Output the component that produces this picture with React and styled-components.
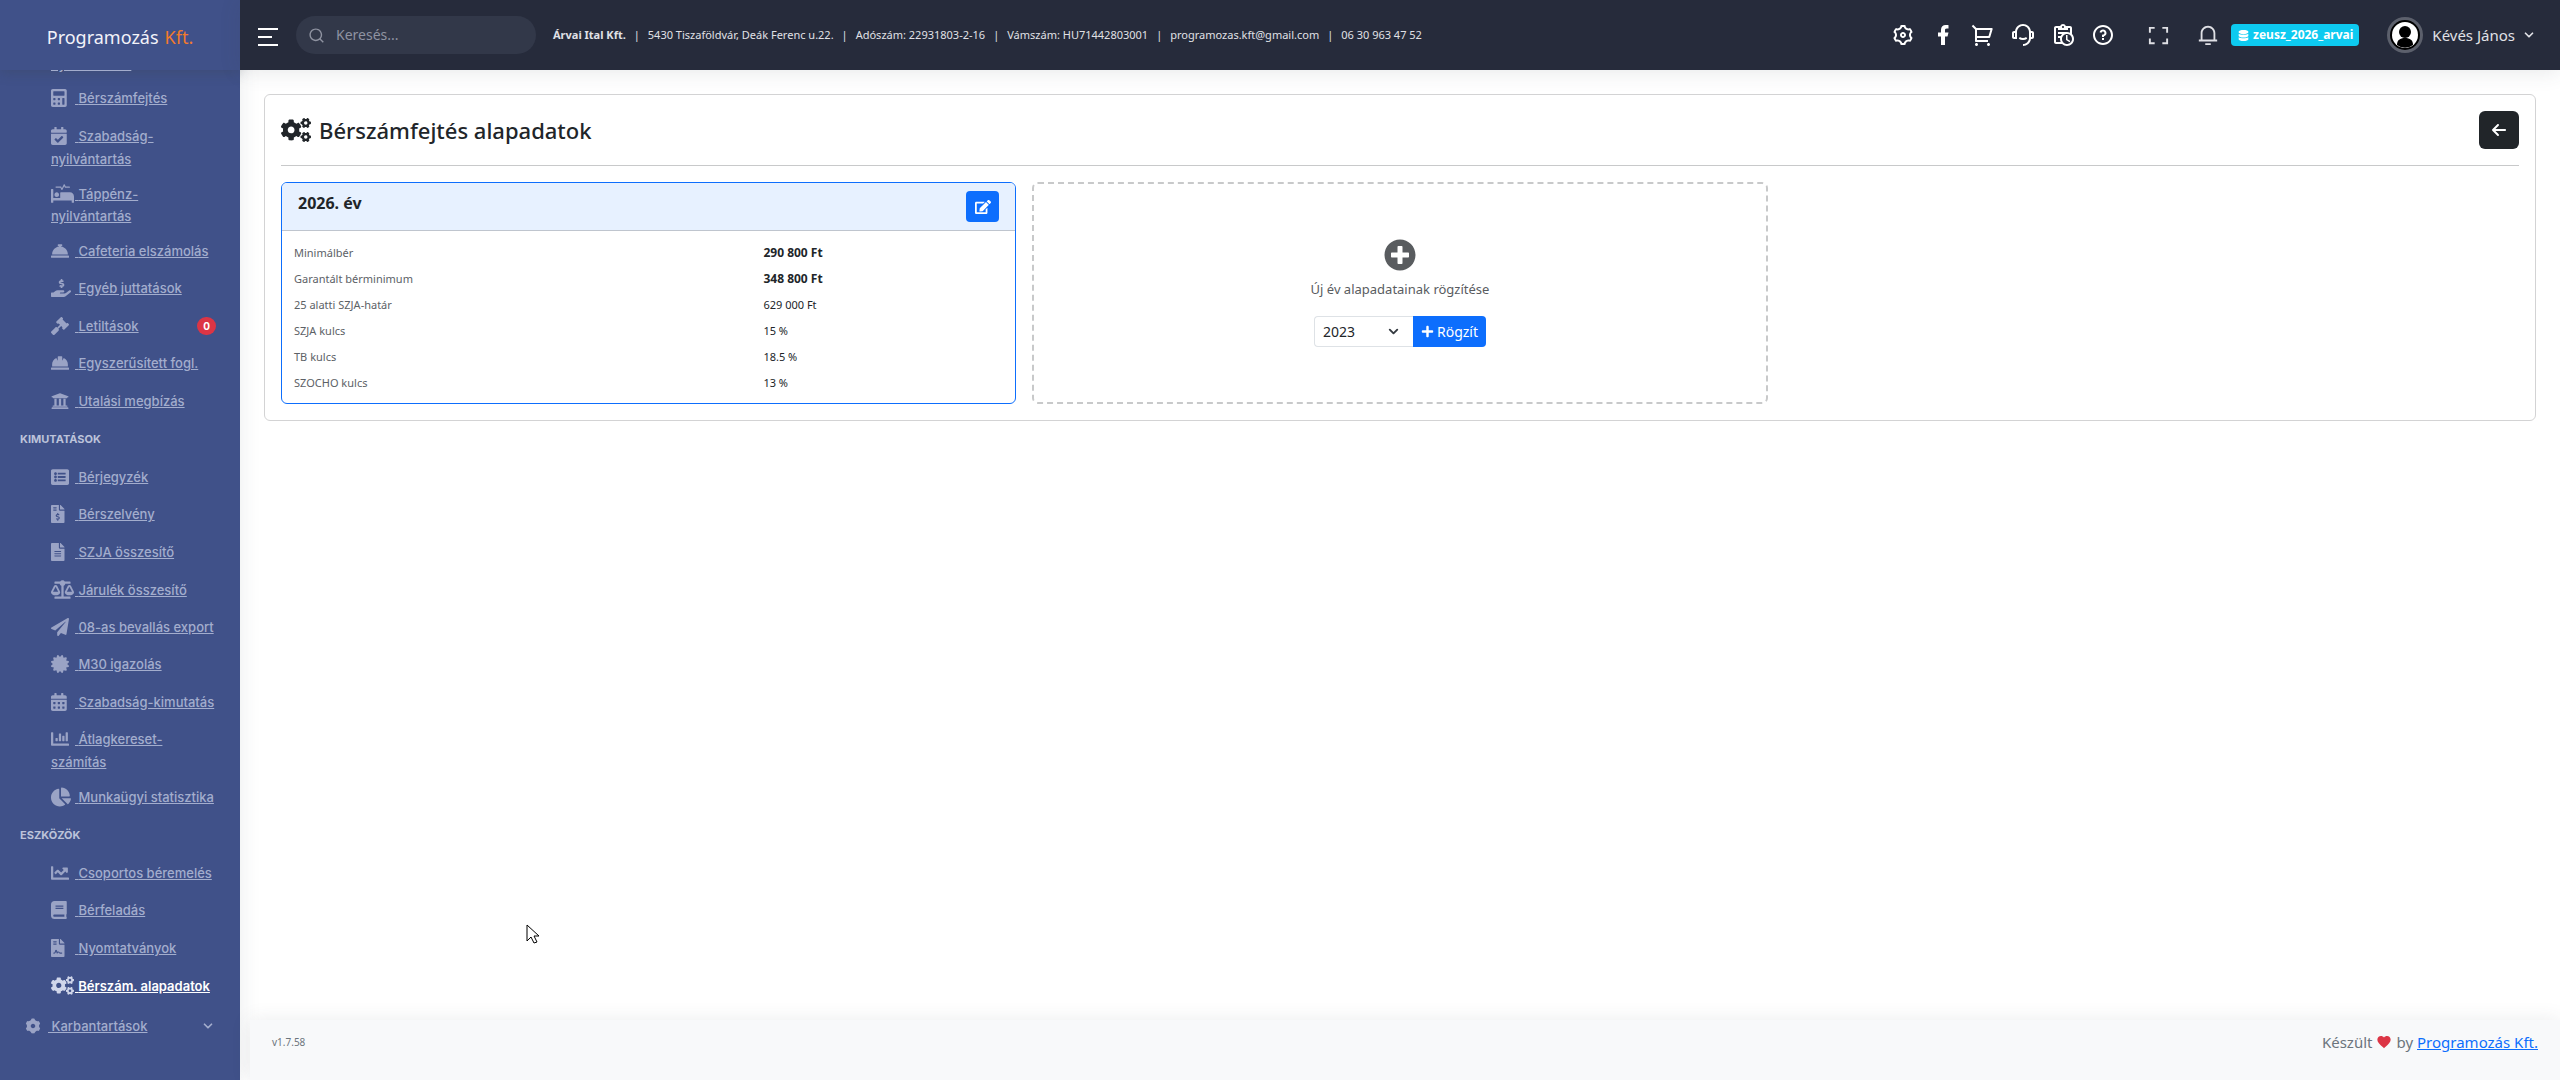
import React from 'react';
import styled, { createGlobalStyle } from 'styled-components';
import {
  FaCalculator, FaCalendarCheck, FaProcedures, FaConciergeBell, FaHandHoldingUsd, FaGavel,
  FaHardHat, FaUniversity, FaListAlt, FaFileInvoiceDollar, FaFileAlt, FaBalanceScale,
  FaPaperPlane, FaCertificate, FaCalendarAlt, FaChartBar, FaChartPie, FaChartLine, FaBook,
  FaFileContract, FaCogs, FaEdit, FaPlusCircle, FaPlus, FaDatabase,
} from 'react-icons/fa';
import { FaArrowLeft } from 'react-icons/fa6';
import {
  RiSettings3Line, RiSettings3Fill, RiShoppingCart2Line, RiCustomerService2Line,
  RiQuestionLine, RiFacebookFill, RiNotification3Line, RiSearchLine, RiFullscreenLine,
} from 'react-icons/ri';
import { MdFavorite } from 'react-icons/md';
import { FiChevronDown } from 'react-icons/fi';

const ui = '"Noto Sans", "Open Sans", sans-serif';
const side = 'Inter, "Liberation Sans", sans-serif';

const Global = createGlobalStyle`
  *, *::before, *::after { box-sizing: border-box; }
  body {
    margin: 0;
    background: #fff;
    color: #212529;
    font: 400 15px/24px ${ui};
  }
  button, input, select { font: inherit; }
  button { cursor: pointer; }
  svg { display: block; flex: none; }
`;

const Shell = styled.div`
  display: flex;
  height: 100vh;
  overflow: hidden;
`;

const Sidebar = styled.aside`
  flex: none;
  width: 240px;
  display: flex;
  flex-direction: column;
  background: #405189;
  font-family: ${side};
  box-shadow: 0 0 20px rgba(56, 65, 74, 0.1);
`;

const Brand = styled.a`
  flex: none;
  height: 70px;
  display: flex;
  align-items: center;
  justify-content: center;
  gap: 6px;
  padding-top: 4px;
  color: #f3f3f9;
  font: 400 18px/24px ${ui};
  text-decoration: none;
  box-shadow: 0 2px 12px rgba(56, 65, 74, 0.3);
`;

const Accent = styled.span`
  color: #f27a2c;
`;

const Scroller = styled.nav`
  flex: 1;
  min-height: 0;
  overflow: hidden;
  display: flex;
  flex-direction: column;
  justify-content: flex-end;
  padding-bottom: 31px;
`;

const Menu = styled.ul`
  list-style: none;
  margin: 0;
  padding: 0;
`;

const GroupTitle = styled.h2`
  margin: 0;
  padding: 10px 20px 9px;
  color: #bcc3da;
  font-size: 11px;
  line-height: 20px;
  font-weight: 700;
  text-transform: uppercase;
`;

const Row = styled.li`
  display: flex;
  align-items: center;
  padding: 6px 24px 5px 51px;
  &:nth-child(even) { padding-bottom: 6px; }
`;

const MenuLink = styled.a`
  flex: 1;
  color: ${(p) => (p.$active ? '#fff' : '#a3adcd')};
  font-size: 13px;
  line-height: 20px;
  font-weight: ${(p) => (p.$active ? 600 : 500)};
  text-decoration: underline;
`;

const Glyph = styled.span`
  display: inline-flex;
  align-items: center;
  min-width: 24px;
  height: 26px;
  vertical-align: ${(p) => (p.$size > 20 ? '-6px' : p.$size > 18 ? '-5px' : '-4px')};
  font-size: ${(p) => p.$size}px;
  color: ${(p) => (p.$active ? '#d0d6ea' : '#9aa3c5')};
`;

const Count = styled.span`
  flex: none;
  min-width: 19px;
  padding: 4px 5px;
  border-radius: 9px;
  background: #dc3545;
  color: #fff;
  font-size: 10px;
  line-height: 10px;
  font-weight: 700;
  text-align: center;
`;

const Maintenance = styled.div`
  display: flex;
  align-items: center;
  padding: 9px 25px 10px 24px;
  color: #a3adcd;
`;

const Main = styled.div`
  flex: 1;
  min-width: 0;
  display: flex;
  flex-direction: column;
`;

const Topbar = styled.header`
  flex: none;
  height: 70px;
  display: flex;
  align-items: center;
  padding: 0 24px 0 18px;
  background: #262b3b;
  color: #e9ebf2;
  box-shadow: 0 2px 20px rgba(56, 65, 74, 0.12);
`;

const Burger = styled.button`
  display: grid;
  gap: 6px;
  padding: 4px 0 0;
  width: 20px;
  border: 0;
  background: none;
`;

const Bar = styled.span`
  height: 2px;
  width: ${(p) => (p.$short ? '14px' : '20px')};
  background: #fff;
`;

const Search = styled.label`
  display: flex;
  align-items: center;
  gap: 11px;
  width: 240px;
  height: 38px;
  margin: 0 17px 0 18px;
  padding: 0 12px;
  border-radius: 19px;
  background: #323849;
  color: #8f93a1;
`;

const SearchInput = styled.input`
  flex: 1;
  min-width: 0;
  padding: 0;
  border: 0;
  outline: 0;
  background: none;
  color: #fff;
  font-size: 14px;
  &::placeholder { color: #8f93a1; }
`;

const Company = styled.div`
  flex: 1;
  display: flex;
  font-size: 11px;
  line-height: 16px;
  color: #e0e1e6;
  white-space: nowrap;
`;

const CompanyPart = styled.span`
  &:first-child { font-weight: 700; }
  & + &::before {
    content: '|';
    margin: 0 8px;
  }
`;

const Tools = styled.div`
  display: flex;
  align-items: center;
  gap: 16px;
`;

const Tool = styled.button`
  display: grid;
  place-items: center;
  width: 24px;
  padding: 0;
  border: 0;
  background: none;
  color: ${(p) => (p.$soft ? '#dfe0e5' : '#fff')};
  font-size: 24px;
`;

const Tail = styled.div`
  display: flex;
  align-items: center;
  gap: 26px;
  margin: 0 11px 0 31px;
`;

const Database = styled.span`
  display: flex;
  align-items: center;
  gap: 4px;
  height: 22px;
  padding: 0 6px 0 7px;
  border-radius: 4px;
  background: #0dcaf0;
  color: #fff;
  font-size: 12px;
  font-weight: 700;
`;

const User = styled.button`
  display: flex;
  align-items: center;
  gap: 9px;
  margin-left: 28px;
  padding: 0;
  border: 0;
  background: none;
  color: #e0e1e6;
  font-size: 15px;
`;

const UserName = styled.span`
  display: flex;
  align-items: center;
  gap: 7px;
`;

const Content = styled.main`
  flex: 1;
  padding: 24px;
`;

const Panel = styled.section`
  padding: 16px;
  border: 1px solid #d3d3d4;
  border-radius: 6px;
`;

const PanelHead = styled.header`
  display: flex;
  align-items: center;
  justify-content: space-between;
  padding-bottom: 16px;
  margin-bottom: 16px;
  border-bottom: 1px solid #c8c9ca;
`;

const Title = styled.h1`
  display: flex;
  align-items: center;
  gap: 8px;
  margin: 0;
  font-size: 22px;
  line-height: 38px;
  font-weight: 500;
`;

const Back = styled.button`
  display: grid;
  place-items: center;
  width: 40px;
  height: 38px;
  border: 0;
  border-radius: 6px;
  background: #212529;
  color: #fff;
  font-size: 16px;
`;

const Grid = styled.div`
  display: grid;
  grid-template-columns: repeat(3, 1fr);
  gap: 16px;
`;

const YearCard = styled.article`
  overflow: hidden;
  border: 1px solid #0d6efd;
  border-radius: 6px;
`;

const YearHead = styled.header`
  display: flex;
  justify-content: space-between;
  padding: 8px 16px;
  border-bottom: 1px solid #bfc5ce;
  background: #e7f1ff;
`;

const YearTitle = styled.h2`
  margin: 0;
  font-size: 16px;
  line-height: 24px;
  font-weight: 700;
`;

const Edit = styled.button`
  display: grid;
  place-items: center;
  width: 33px;
  height: 31px;
  border: 0;
  border-radius: 4px;
  background: #0d6efd;
  color: #fff;
  font-size: 16px;
`;

const Facts = styled.table`
  width: calc(100% - 16px);
  margin: 9px 8px 7px;
  table-layout: fixed;
  border-collapse: collapse;
  font-size: 11px;
  line-height: 18px;
`;

const FactName = styled.th`
  width: 66%;
  padding: 4px;
  color: #5c6166;
  font-weight: 400;
  text-align: left;
`;

const Fact = styled.td`
  padding: 4px 0;
  font-size: ${(p) => (p.$strong ? '12px' : '11px')};
  font-weight: ${(p) => (p.$strong ? 700 : 400)};
`;

const NewYear = styled.form`
  display: flex;
  flex-direction: column;
  align-items: center;
  justify-content: center;
  border: 2px dashed #c8c9ca;
  border-radius: 6px;
  color: #595c5f;
  font-size: 14px;
`;

const Hint = styled.label`
  margin: 8px 0 16px;
  font-size: 13px;
  line-height: 21px;
`;

const InputGroup = styled.div`
  display: flex;
`;

const SelectWrap = styled.span`
  position: relative;
  color: #343a40;
`;

const YearSelect = styled.select`
  width: 99px;
  height: 31px;
  padding: 0 8px;
  border: 1px solid #dee2e6;
  border-right: 0;
  border-radius: 4px 0 0 4px;
  appearance: none;
  background: #fff;
  color: #212529;
`;

const SelectArrow = styled(FiChevronDown)`
  position: absolute;
  right: 12px;
  top: 8px;
  pointer-events: none;
`;

const Save = styled.button`
  display: flex;
  align-items: center;
  gap: 3px;
  height: 31px;
  padding: 0 8px;
  border: 0;
  border-radius: 0 4px 4px 0;
  background: #0d6efd;
  color: #fff;
`;

const Footer = styled.footer`
  flex: none;
  display: flex;
  justify-content: space-between;
  padding: 10px 22px 26px;
  margin-left: 10px;
  line-height: 24px;
  background: #f8f9fa;
  box-shadow: 0 0 20px rgba(56, 65, 74, 0.1);
  color: #6c757d;
`;

const Version = styled.span`
  font-size: 10px;
`;

const Credit = styled.span`
  display: flex;
  align-items: center;
  gap: 4px;
`;

const CreditLink = styled.a`
  color: #0d6efd;
`;

const Pointer = styled.svg`
  position: fixed;
  left: 526px;
  top: 924px;
  pointer-events: none;
`;

const payroll = [
  { label: 'nyilvántartás' },
  { label: 'Bérszámfejtés', icon: FaCalculator },
  { label: 'Szabadság-nyilvántartás', icon: FaCalendarCheck },
  { label: 'Táppénz-nyilvántartás', icon: FaProcedures, size: 23 },
  { label: 'Cafeteria elszámolás', icon: FaConciergeBell },
  { label: 'Egyéb juttatások', icon: FaHandHoldingUsd, size: 20 },
  { label: 'Letiltások', icon: FaGavel, count: 0 },
  { label: 'Egyszerűsített fogl.', icon: FaHardHat },
  { label: 'Utalási megbízás', icon: FaUniversity },
];
const reports = [
  { label: 'Bérjegyzék', icon: FaListAlt },
  { label: 'Bérszelvény', icon: FaFileInvoiceDollar },
  { label: 'SZJA összesítő', icon: FaFileAlt },
  { label: 'Járulék összesítő', icon: FaBalanceScale, size: 23 },
  { label: '08-as bevallás export', icon: FaPaperPlane },
  { label: 'M30 igazolás', icon: FaCertificate },
  { label: 'Szabadság-kimutatás', icon: FaCalendarAlt },
  { label: 'Átlagkereset-számítás', icon: FaChartBar },
  { label: 'Munkaügyi statisztika', icon: FaChartPie, size: 20 },
];
const utilities = [
  { label: 'Csoportos béremelés', icon: FaChartLine },
  { label: 'Bérfeladás', icon: FaBook },
  { label: 'Nyomtatványok', icon: FaFileContract },
  { label: 'Bérszám. alapadatok', icon: FaCogs, size: 23, active: true },
];
const company = [
  'Árvai Ital Kft.',
  '5430 Tiszaföldvár, Deák Ferenc u.22.',
  'Adószám: 22931803-2-16',
  'Vámszám: HU71442803001',
  'programozas.kft@gmail.com',
  '06 30 963 47 52',
];
const facts = [
  ['Minimálbér', '290 800 Ft', true],
  ['Garantált bérminimum', '348 800 Ft', true],
  ['25 alatti SZJA-határ', '629 000 Ft'],
  ['SZJA kulcs', '15 %'],
  ['TB kulcs', '18.5 %'],
  ['SZOCHO kulcs', '13 %'],
];

function MenuGroup({ items }) {
  return (
    <Menu>
      {items.map(({ label, icon: Icon, size = 18, count, active }) => (
        <Row key={label}>
          <MenuLink href="#" $active={active}>
            {Icon && (
              <>
                <Glyph $active={active} $size={size}><Icon preserveAspectRatio="xMinYMid" /></Glyph>
                &nbsp;
              </>
            )}
            {label}
          </MenuLink>
          {count !== undefined && <Count>{count}</Count>}
        </Row>
      ))}
    </Menu>
  );
}

function ClipboardClock() {
  return (
    <svg width="1em" height="1em" viewBox="0 0 24 24" fill="currentColor">
      <path d="M21 11.11V5c0-1.1-.89-2-2-2h-4.18C14.4 1.84 13.3 1 12 1s-2.4.84-2.82 2H5c-1.1 0-2 .9-2 2v14c0 1.1.9 2 2 2h6.11c1.26 1.24 2.98 2 4.89 2 3.87 0 7-3.13 7-7 0-1.91-.76-3.63-2-4.89M12 3c.55 0 1 .45 1 1s-.45 1-1 1-1-.45-1-1 .45-1 1-1M5 19V5h2v2h10V5h2v4.68c-.91-.43-1.92-.68-3-.68H7v2h4.1c-.6.57-1.06 1.25-1.42 2H7v2h2.08c-.05.33-.08.66-.08 1 0 1.08.25 2.09.68 3H5m11 2c-2.76 0-5-2.24-5-5s2.24-5 5-5 5 2.24 5 5-2.24 5-5 5m.5-4.75 2.86 1.69-.75 1.22L15 17v-5h1.5v4.25z" />
    </svg>
  );
}

function Avatar() {
  return (
    <svg width="36" height="36" viewBox="0 0 36 36">
      <circle cx="18" cy="18" r="18" fill="#5c606c" />
      <circle cx="18" cy="18" r="15" fill="#000" />
      <circle cx="18" cy="18" r="13" fill="#fff" />
      <circle cx="18" cy="15" r="6" fill="#000" />
      <path d="M10 28c0-5 3-7 8-7s8 2 8 7a13 13 0 0 1-16 0z" fill="#000" />
    </svg>
  );
}

export default function App() {
  return (
    <>
      <Global />
      <Shell>
        <Sidebar>
          <Brand href="#">Programozás <Accent>Kft.</Accent></Brand>
          <Scroller>
            <MenuGroup items={payroll} />
            <GroupTitle>Kimutatások</GroupTitle>
            <MenuGroup items={reports} />
            <GroupTitle>Eszközök</GroupTitle>
            <MenuGroup items={utilities} />
            <Maintenance>
              <MenuLink href="#"><Glyph $size={18}><RiSettings3Fill /></Glyph>&nbsp;Karbantartások</MenuLink>
              <FiChevronDown size={14} strokeWidth={3} />
            </Maintenance>
          </Scroller>
        </Sidebar>
        <Main>
          <Topbar>
            <Burger aria-label="Menü"><Bar /><Bar $short /><Bar /></Burger>
            <Search>
              <RiSearchLine size={17} />
              <SearchInput type="text" placeholder="Keresés..." aria-label="Keresés" />
            </Search>
            <Company>
              {company.map((part) => <CompanyPart key={part}>{part}</CompanyPart>)}
            </Company>
            <Tools>
              <Tool aria-label="Beállítások"><RiSettings3Line /></Tool>
              <Tool aria-label="Facebook"><RiFacebookFill /></Tool>
              <Tool aria-label="Kosár"><RiShoppingCart2Line /></Tool>
              <Tool aria-label="Támogatás"><RiCustomerService2Line /></Tool>
              <Tool aria-label="Feladatok"><ClipboardClock /></Tool>
              <Tool aria-label="Súgó"><RiQuestionLine /></Tool>
            </Tools>
            <Tail>
              <Tool $soft aria-label="Teljes képernyő"><RiFullscreenLine size={23} /></Tool>
              <Tool $soft aria-label="Értesítések"><RiNotification3Line size={22} /></Tool>
            </Tail>
            <Database><FaDatabase size={11} />zeusz_2026_arvai</Database>
            <User>
              <Avatar />
              <UserName>Kévés János<FiChevronDown size={14} strokeWidth={3} /></UserName>
            </User>
          </Topbar>
          <Content>
            <Panel>
              <PanelHead>
                <Title><FaCogs size={30} />Bérszámfejtés alapadatok</Title>
                <Back aria-label="Vissza"><FaArrowLeft /></Back>
              </PanelHead>
              <Grid>
                <YearCard>
                  <YearHead>
                    <YearTitle>2026. év</YearTitle>
                    <Edit aria-label="Szerkesztés"><FaEdit /></Edit>
                  </YearHead>
                  <Facts>
                    <tbody>
                      {facts.map(([name, value, strong]) => (
                        <tr key={name}>
                          <FactName scope="row">{name}</FactName>
                          <Fact $strong={strong}>{value}</Fact>
                        </tr>
                      ))}
                    </tbody>
                  </Facts>
                </YearCard>
                <NewYear>
                  <FaPlusCircle size={32} />
                  <Hint htmlFor="year">Új év alapadatainak rögzítése</Hint>
                  <InputGroup>
                    <SelectWrap>
                      <YearSelect id="year" defaultValue="2023"><option>2023</option></YearSelect>
                      <SelectArrow size={15} strokeWidth={3} />
                    </SelectWrap>
                    <Save type="button"><FaPlus size={13} />Rögzít</Save>
                  </InputGroup>
                </NewYear>
              </Grid>
            </Panel>
          </Content>
          <Footer>
            <Version>v1.7.58</Version>
            <Credit>Készült <MdFavorite size={16} color="#dc3545" /> by <CreditLink href="#">Programozás Kft.</CreditLink></Credit>
          </Footer>
        </Main>
      </Shell>
      <Pointer width="14" height="20" viewBox="0 0 14 20">
        <path d="M1 1v16l4-4 3 6 3-1-3-6h5z" fill="#fff" stroke="#000" />
      </Pointer>
    </>
  );
}
